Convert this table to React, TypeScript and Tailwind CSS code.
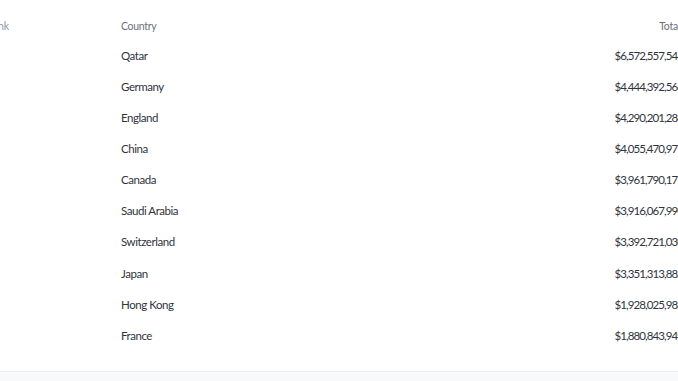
import React from "react";

const rows = [
  ["Qatar", "$6,572,557,546"],
  ["Germany", "$4,444,392,564"],
  ["England", "$4,290,201,284"],
  ["China", "$4,055,470,977"],
  ["Canada", "$3,961,790,171"],
  ["Saudi Arabia", "$3,916,067,990"],
  ["Switzerland", "$3,392,721,030"],
  ["Japan", "$3,351,313,885"],
  ["Hong Kong", "$1,928,025,983"],
  ["France", "$1,880,843,949"],
];

export default function App() {
  return (
    <div className="w-[678px] h-[381px] overflow-hidden bg-white flex flex-col" style={{ fontFamily: "Lato, 'Open Sans', sans-serif" }}>
      <div className="h-[371px] overflow-hidden">
        <div className="-ml-[30px] w-[730px]">
          <div className="flex h-[40px] items-end pb-[6px] text-[10.5px] leading-[16px] tracking-[-0.3px]">
            <div className="w-[151px] pl-[17px] text-[#8a98ad]">Rank</div>
            <div className="flex-1 text-[#6b7078]">Country</div>
            <div className="w-[120px] pr-[20px] text-right text-[#6b7078]">Total</div>
          </div>
          {rows.map(([c, v]) => (
            <div key={c} className="flex h-[31.1px] items-center text-[11.5px] tracking-[-0.45px] text-[#2f343b]">
              <div className="w-[151px]"></div>
              <div className="flex-1">{c}</div>
              <div className="w-[120px] pr-[17px] text-right tracking-[-0.9px]">{v}</div>
            </div>
          ))}
        </div>
      </div>
      <div className="flex-1 border-t border-[#eceef1] bg-[#f8f9fb]"></div>
    </div>
  );
}
